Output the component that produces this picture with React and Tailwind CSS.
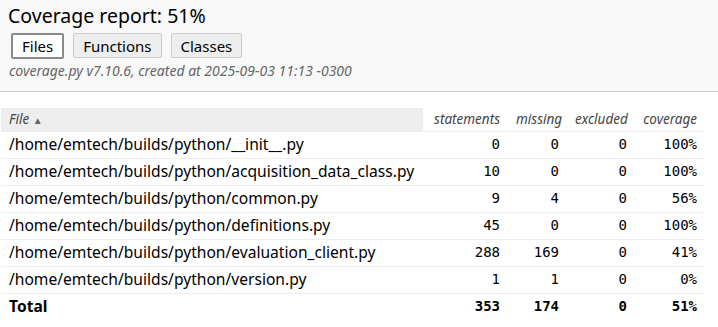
import React from "react";

const rows = [
  { name: "/home/emtech/builds/python/__init__.py", statements: 0, missing: 0, excluded: 0, coverage: "100%" },
  { name: "/home/emtech/builds/python/acquisition_data_class.py", statements: 10, missing: 0, excluded: 0, coverage: "100%" },
  { name: "/home/emtech/builds/python/common.py", statements: 9, missing: 4, excluded: 0, coverage: "56%" },
  { name: "/home/emtech/builds/python/definitions.py", statements: 45, missing: 0, excluded: 0, coverage: "100%" },
  { name: "/home/emtech/builds/python/evaluation_client.py", statements: 288, missing: 169, excluded: 0, coverage: "41%" },
  { name: "/home/emtech/builds/python/version.py", statements: 1, missing: 1, excluded: 0, coverage: "0%" },
];

const sans = "font-['Noto_Sans',sans-serif]";
const mono = "font-['DejaVu_Sans_Mono',monospace] text-[14px]";

const App = () => {
  return (
    <div className={`min-h-[327px] w-[718px] bg-white text-black ${sans}`}>
      {/* Header */}
      <div className="h-[92px] border-b border-[#ccc] bg-[#f8f8f8] px-2 pt-[2px]">
        <h1 className="text-[19.5px] leading-[28px]">Coverage report: 51%</h1>
        <div className="mt-[3px] flex gap-[9px] pl-[3px]">
          <button className="h-[26px] rounded-[2px] border-2 border-[#8a8a8a] bg-white px-[9px] text-[15px] leading-[20px]">
            Files
          </button>
          <button className="h-[25px] rounded-[2px] border border-[#ccc] bg-[#eee] px-[9px] text-[15px] leading-[20px]">
            Functions
          </button>
          <button className="h-[25px] rounded-[2px] border border-[#ccc] bg-[#eee] px-[9px] text-[15px] leading-[20px]">
            Classes
          </button>
        </div>
        <p className="mt-[3px] pl-[1px] text-[14px] italic leading-[18px] text-[#666]">
          coverage.py v7.10.6, created at 2025-09-03 11:13 -0300
        </p>
      </div>

      {/* Table */}
      <div className="pl-[1px] pt-[16px]">
        <table className="w-[704px] table-fixed border-collapse">
          <thead>
            <tr className="border-b border-[#eee] text-[13.5px] italic text-[#444]">
              <th className="h-[23px] w-[422px] bg-[#eee] px-2 text-left font-normal">
                File <span className="text-[10px] not-italic text-[#666]">▲</span>
              </th>
              <th className="w-[85px] px-2 text-right font-normal">statements</th>
              <th className="w-[59px] px-2 text-right font-normal">missing</th>
              <th className="w-[68px] px-2 text-right font-normal">excluded</th>
              <th className="w-[70px] px-2 text-right font-normal">coverage</th>
            </tr>
          </thead>
          <tbody>
            {rows.map((row) => (
              <tr key={row.name} className="h-[27px] border-b border-[#eee]">
                <td className="px-2 text-left text-[15.6px] whitespace-nowrap">{row.name}</td>
                <td className={`px-2 text-right ${mono}`}>{row.statements}</td>
                <td className={`px-2 text-right ${mono}`}>{row.missing}</td>
                <td className={`px-2 text-right ${mono}`}>{row.excluded}</td>
                <td className={`px-2 text-right ${mono}`}>{row.coverage}</td>
              </tr>
            ))}
            <tr className="h-[27px] font-bold">
              <td className="px-2 text-left text-[15.6px]">Total</td>
              <td className={`px-2 text-right ${mono}`}>353</td>
              <td className={`px-2 text-right ${mono}`}>174</td>
              <td className={`px-2 text-right ${mono}`}>0</td>
              <td className={`px-2 text-right ${mono}`}>51%</td>
            </tr>
          </tbody>
        </table>
      </div>
    </div>
  );
};

export default App;
